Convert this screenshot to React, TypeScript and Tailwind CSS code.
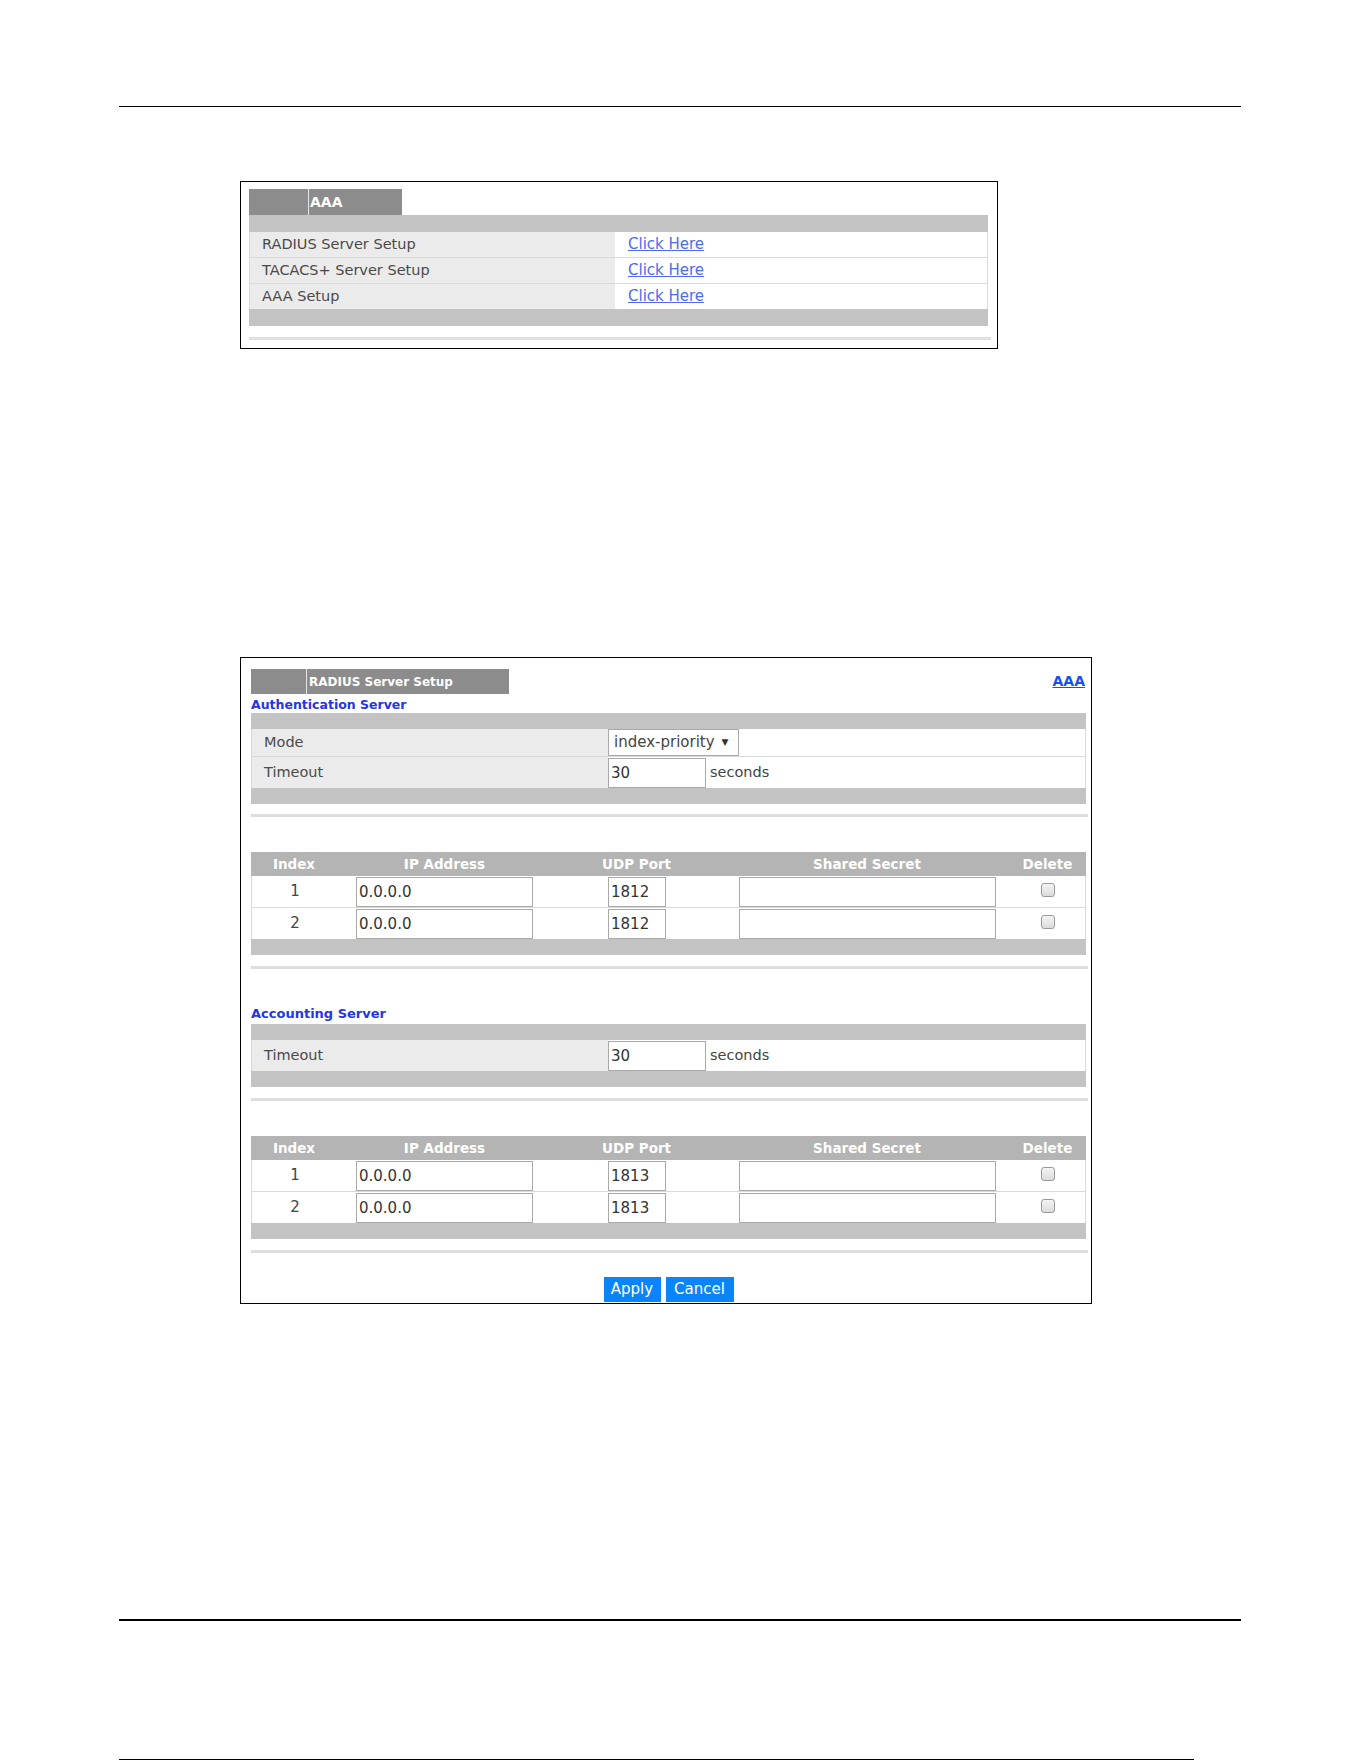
import React from "react";

const FONT = { fontFamily: '"DejaVu Sans", "Liberation Sans", sans-serif' };

function Box({ w, children }: { w: string; children?: React.ReactNode }) {
  return (
    <div className={`${w} h-[30px] border border-[#a9a9a9] bg-white flex items-center pl-[2px] text-[15px] text-[#333]`}>
      {children}
    </div>
  );
}

function Check() {
  return (
    <div className="w-[14px] h-[14px] rounded-[3px] border border-[#9a9a9a] bg-gradient-to-b from-[#f4f4f4] to-[#dcdcdc]" />
  );
}

function Band() {
  return <div className="h-[16px] bg-[#c3c3c3]" />;
}

function Sep({ mt }: { mt: string }) {
  return <div className={`${mt} h-[3px] bg-[#dedede] mr-[-2px]`} />;
}

function ServerTable({ port }: { port: string }) {
  const cols = "grid grid-cols-[86px_215px_169px_292px_72px]";
  return (
    <div>
      <div className={`${cols} h-[24px] bg-[#b4b4b4] text-white font-bold text-[13.5px] items-center`}>
        <div className="text-center">Index</div>
        <div className="text-center">IP Address</div>
        <div className="text-center">UDP Port</div>
        <div className="text-center">Shared Secret</div>
        <div className="text-center pr-[3px]">Delete</div>
      </div>
      {["1", "2"].map((i, k) => (
        <div
          key={i}
          className={`${cols} h-[31px] border-x border-[#d9d9d9] bg-white ${k === 1 ? "border-t h-[32px]" : ""}`}
        >
          <div className="flex items-center justify-center text-[15px] text-[#444]">{i}</div>
          <div className="pl-[18px] pt-[1px]">
            <Box w="w-[177px]">0.0.0.0</Box>
          </div>
          <div className="pl-[55px] pt-[1px]">
            <Box w="w-[58px]">{port}</Box>
          </div>
          <div className="pl-[17px] pt-[1px]">
            <Box w="w-[257px]" />
          </div>
          <div className="flex items-center justify-center pr-[4px] pb-[4px]">
            <Check />
          </div>
        </div>
      ))}
      <Band />
    </div>
  );
}

function TimeoutRow({ top }: { top?: boolean }) {
  return (
    <div className={`flex h-[31px] border-x border-[#d9d9d9] ${top ? "border-t h-[32px]" : ""}`}>
      <div className="w-[356px] bg-[#ebebeb] flex items-center pl-[12px] text-[14.5px] text-[#4a4a4a]">Timeout</div>
      <div className="flex-1 bg-white flex items-start">
        <div className="pt-[1px]">
          <Box w="w-[98px]">30</Box>
        </div>
        <div className="ml-[4px] h-[31px] flex items-center text-[14.5px] text-[#444]">seconds</div>
      </div>
    </div>
  );
}

export default function App() {
  return (
    <div className="w-[1361px] h-[1761px] bg-white relative overflow-hidden" style={FONT}>
      <div className="pt-[106px]">
        <div className="ml-[119px] w-[1122px] h-[1px] bg-black" />

        {/* AAA panel */}
        <div className="mt-[74px] ml-[240px] w-[758px] border border-black pt-[7px] pl-[8px] pr-[9px] pb-[8px]">
          <div className="flex h-[26px] w-[153px] bg-[#8c8c8c]">
            <div className="w-[59px]" />
            <div className="w-[1px] bg-[#e6e6e6]" />
            <div className="pl-[1px] flex items-center text-white font-bold text-[14px]">AAA</div>
          </div>
          <div className="h-[17px] bg-[#c3c3c3]" />
          {["RADIUS Server Setup", "TACACS+ Server Setup", "AAA Setup"].map((t, k) => (
            <div
              key={t}
              className={`flex h-[25px] border-x border-[#dadada] ${k > 0 ? "border-t h-[26px]" : ""}`}
            >
              <div className="w-[365px] bg-[#ebebeb] flex items-center pl-[12px] text-[14.5px] text-[#4a4a4a]">{t}</div>
              <div className="flex-1 bg-white flex items-center pl-[13px]">
                <span className="text-[15px] text-[#4a6cf0] underline">Click Here</span>
              </div>
            </div>
          ))}
          <div className="h-[17px] bg-[#c3c3c3]" />
          <div className="mt-[11px] h-[3px] bg-[#e0e0e0] mr-[-3px]" />
        </div>

        {/* RADIUS panel */}
        <div className="mt-[308px] ml-[240px] w-[852px] border border-black pt-[11px] pl-[10px] pr-[5px] pb-[1px]">
          <div className="flex h-[25px] items-center justify-between">
            <div className="flex h-[25px] w-[258px] bg-[#8c8c8c]">
              <div className="w-[55px]" />
              <div className="w-[1px] bg-[#e6e6e6]" />
              <div className="pl-[2px] flex items-center text-white font-bold text-[12px]">RADIUS Server Setup</div>
            </div>
            <span className="text-[14px] font-bold text-[#1452f0] underline pr-[1px]">AAA</span>
          </div>
          <div className="h-[19px] leading-[19px] text-[12.5px] font-bold text-[#2236e8] pt-[1px]">Authentication Server</div>
          <Band />
          <div className="flex h-[27px] border-x border-[#d9d9d9]">
            <div className="w-[356px] bg-[#ebebeb] flex items-center pl-[12px] text-[14.5px] text-[#4a4a4a]">Mode</div>
            <div className="flex-1 bg-white">
              <div className="w-[131px] h-[27px] border border-[#a9a9a9] flex items-center pl-[5px] text-[15px] text-[#444]">
                index-priority
                <span className="ml-[7px] text-[9px] text-[#333]">▼</span>
              </div>
            </div>
          </div>
          <TimeoutRow top />
          <Band />
          <Sep mt="mt-[10px]" />

          <div className="mt-[35px]">
            <ServerTable port="1812" />
          </div>
          <Sep mt="mt-[11px]" />

          <div className="mt-[35px] h-[20px] leading-[20px] text-[13px] font-bold text-[#2236e8]">Accounting Server</div>
          <Band />
          <TimeoutRow />
          <Band />
          <Sep mt="mt-[11px]" />

          <div className="mt-[35px]">
            <ServerTable port="1813" />
          </div>
          <Sep mt="mt-[11px]" />

          <div className="mt-[24px] flex justify-center gap-[5px]">
            <div className="w-[57px] h-[25px] bg-[#0a84fb] text-white text-[15px] flex items-center justify-center">Apply</div>
            <div className="w-[68px] h-[25px] bg-[#0a84fb] text-white text-[15px] flex items-center justify-center">Cancel</div>
          </div>
        </div>

        <div className="mt-[315px] ml-[119px] w-[1122px] h-[2px] bg-black" />
        <div className="mt-[138px] ml-[119px] w-[1075px] h-[1px] bg-black" />
      </div>
    </div>
  );
}
